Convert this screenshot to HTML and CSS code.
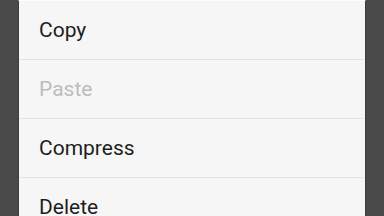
FILE: index.html
```html
<!DOCTYPE html>
<html lang="en">

<head>
    <meta charset="UTF-8">
    <meta name="viewport" content="width=device-width, initial-scale=1.0">
    <title>Context menu</title>
    <link rel="stylesheet" href="styles.css">
</head>

<body>
    <!-- Context menu -->
    <ul class="menu">
        <li class="menu-item">Copy</li>
        <li class="menu-item disabled">Paste</li>
        <li class="menu-item">Compress</li>
        <li class="menu-item">Delete</li>
    </ul>
</body>

</html>
```

FILE: styles.css
```css
body {
    margin: 0;
    padding: 0;
    background-color: #4a4a4a;
    font-family: 'Roboto', 'Noto Sans', sans-serif;
    overflow: hidden;
}

/* Menu panel */
.menu {
    list-style: none;
    margin: 0 18px;
    padding: 0;
    background-color: #f6f6f6;
    border-left: 1px solid #3c3c3c;
    border-right: 1px solid #3c3c3c;
    border-top: 1px solid #fcfcfc;
    height: 240px;
}

.menu-item {
    height: 58px;
    line-height: 59px;
    padding-left: 20px;
    font-size: 21px;
    color: #1e1e1e;
    border-bottom: 1px solid #e3e3e3;
    margin-right: 2px;
}

.menu-item:last-child {
    border-bottom: none;
}

/* Disabled item */
.menu-item.disabled {
    color: #bdbdbd;
}
```
